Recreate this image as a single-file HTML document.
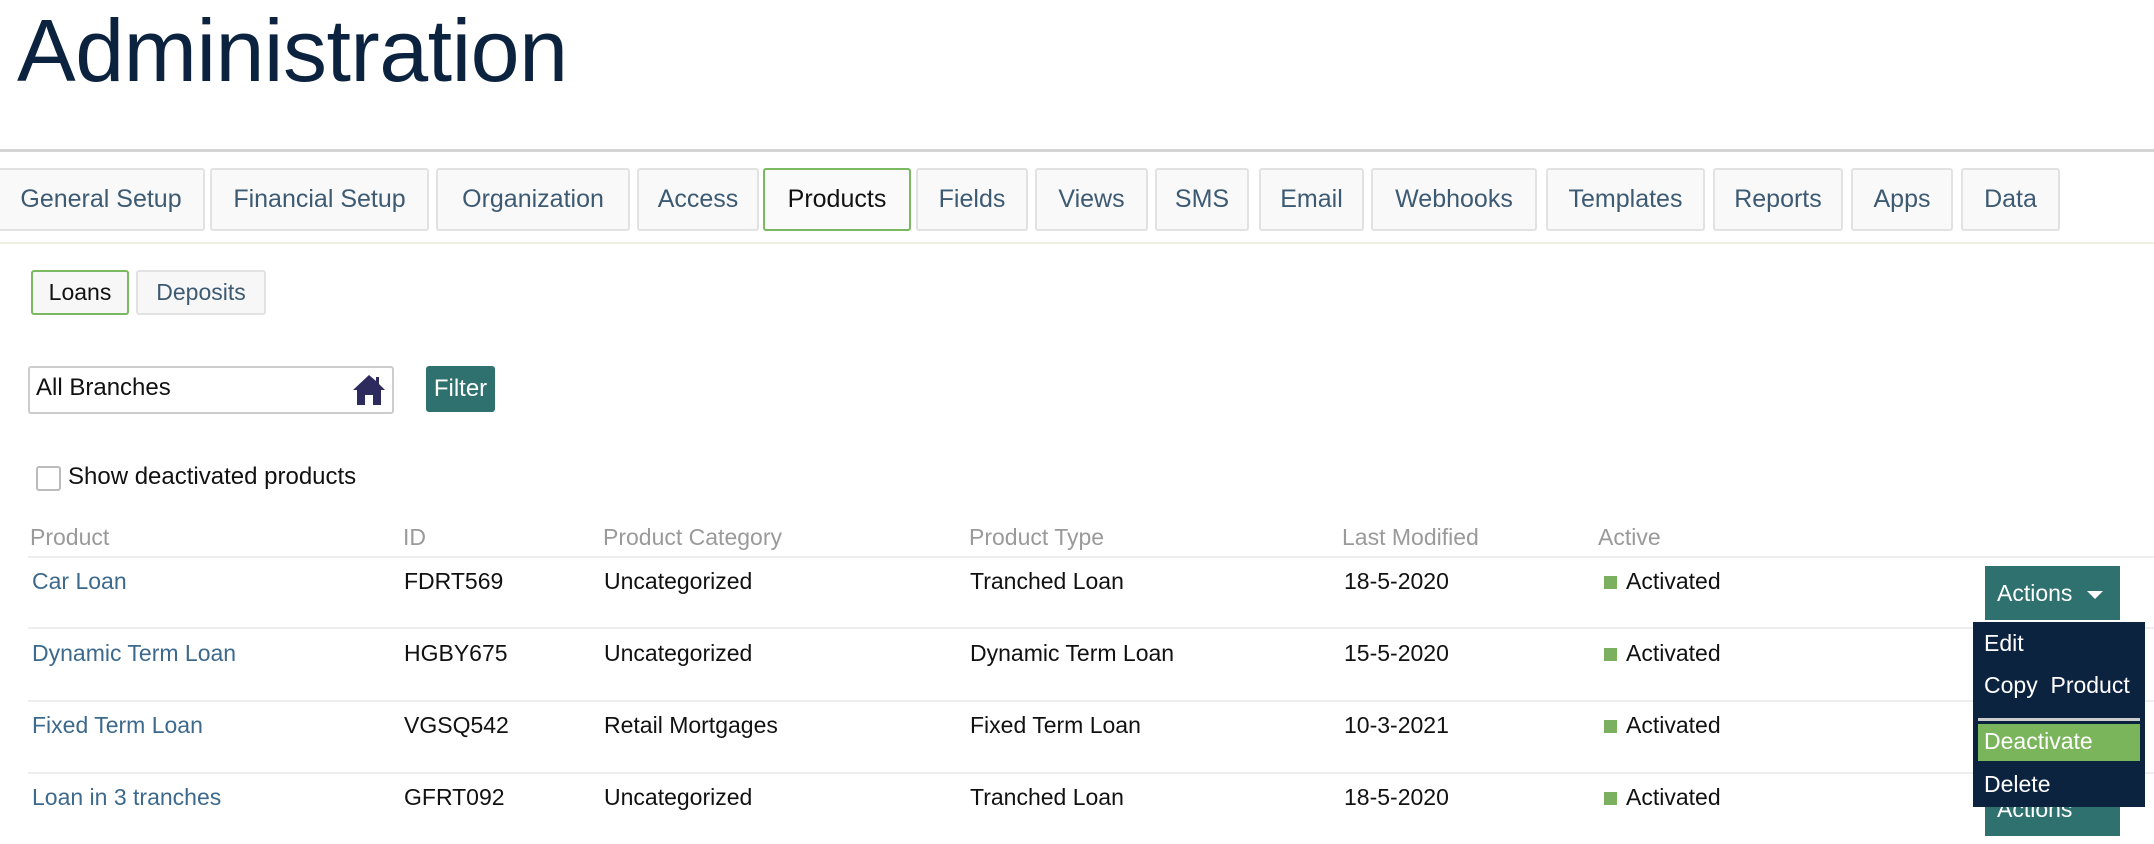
<!DOCTYPE html>
<html><head><style>
*{margin:0;padding:0;box-sizing:border-box}
body{width:2154px;height:844px;overflow:hidden;background:#fff;font-family:"Liberation Sans",sans-serif;position:relative;color:#111}
.a{position:absolute;white-space:nowrap}
h1{position:absolute;left:17px;top:0px;font-size:88px;font-weight:normal;color:#0c2340;letter-spacing:-0.5px}
.rule{position:absolute;left:0;top:149px;width:2154px;height:3px;background:#d4d4d4}
.tab{position:absolute;top:168px;height:63px;border:2px solid #e2e2e2;border-radius:3px;background:#f9f9f9;color:#3d5a73;font-size:25px;text-align:center;line-height:58px;white-space:nowrap}
.tab.on{border-color:#7ab862;color:#111;background:#fafafa}
.line2{position:absolute;left:0;top:242px;width:2154px;height:2px;background:#eef0e2}
.btn{position:absolute;height:45px;border:2px solid #e2e2e2;border-radius:3px;background:#f7f7f7;color:#3d5a73;font-size:23px;text-align:center;line-height:41px}
.hd{position:absolute;top:524px;font-size:23px;color:#9a9a9a}
.hr{position:absolute;left:28px;width:2126px;height:2px;background:#eee}
.c{position:absolute;font-size:23px;color:#111;white-space:nowrap}
.l{color:#3d6a8c}
.sq{position:absolute;width:13px;height:13px;background:#7ab05f}
</style></head><body>
<h1>Administration</h1>
<div class="rule"></div>
<div class="tab" style="left:-3px;width:208px">General Setup</div>
<div class="tab" style="left:210px;width:219px">Financial Setup</div>
<div class="tab" style="left:436px;width:194px">Organization</div>
<div class="tab" style="left:637px;width:122px">Access</div>
<div class="tab on" style="left:763px;width:148px">Products</div>
<div class="tab" style="left:916px;width:112px">Fields</div>
<div class="tab" style="left:1035px;width:113px">Views</div>
<div class="tab" style="left:1155px;width:94px">SMS</div>
<div class="tab" style="left:1259px;width:105px">Email</div>
<div class="tab" style="left:1371px;width:166px">Webhooks</div>
<div class="tab" style="left:1546px;width:159px">Templates</div>
<div class="tab" style="left:1713px;width:130px">Reports</div>
<div class="tab" style="left:1851px;width:102px">Apps</div>
<div class="tab" style="left:1961px;width:99px">Data</div>
<div class="line2"></div>
<div class="btn" style="left:31px;top:270px;width:98px;border-color:#7ab862;color:#111">Loans</div>
<div class="btn" style="left:136px;top:270px;width:130px">Deposits</div>
<div class="a" style="left:28px;top:366px;width:366px;height:48px;border:2px solid #ccc;border-radius:3px"></div>
<div class="a" style="left:36px;top:374px;font-size:24px">All Branches</div>
<svg class="a" style="left:352px;top:373px" width="34" height="34" viewBox="0 0 34 34"><path d="M17 2 L1 17 L5 17 L5 32 L13 32 L13 22 L21 22 L21 32 L29 32 L29 17 L33 17 L27 11 L27 4 L24 4 L24 8 Z" fill="#2d2b5e"/></svg>
<div class="a" style="left:426px;top:366px;width:69px;height:46px;background:#2f716e;border-radius:3px;color:#fff;font-size:24px;text-align:center;line-height:46px">Filter</div>
<div class="a" style="left:36px;top:466px;width:25px;height:25px;border:2px solid #bbb;border-radius:3px"></div>
<div class="a" style="left:68px;top:463px;font-size:24px">Show deactivated products</div>
<div class="hd" style="left:30px">Product</div>
<div class="hd" style="left:403px">ID</div>
<div class="hd" style="left:603px">Product Category</div>
<div class="hd" style="left:969px">Product Type</div>
<div class="hd" style="left:1342px">Last Modified</div>
<div class="hd" style="left:1598px">Active</div>
<div class="hr" style="top:556px"></div>
<div class="hr" style="top:627px"></div>
<div class="hr" style="top:700px"></div>
<div class="hr" style="top:772px"></div>

<div class="c l" style="left:32px;top:568px">Car Loan</div>
<div class="c" style="left:404px;top:568px">FDRT569</div>
<div class="c" style="left:604px;top:568px">Uncategorized</div>
<div class="c" style="left:970px;top:568px">Tranched Loan</div>
<div class="c" style="left:1344px;top:568px">18-5-2020</div>
<div class="sq" style="left:1604px;top:576px"></div><div class="c" style="left:1626px;top:568px">Activated</div>

<div class="c l" style="left:32px;top:640px">Dynamic Term Loan</div>
<div class="c" style="left:404px;top:640px">HGBY675</div>
<div class="c" style="left:604px;top:640px">Uncategorized</div>
<div class="c" style="left:970px;top:640px">Dynamic Term Loan</div>
<div class="c" style="left:1344px;top:640px">15-5-2020</div>
<div class="sq" style="left:1604px;top:648px"></div><div class="c" style="left:1626px;top:640px">Activated</div>

<div class="c l" style="left:32px;top:712px">Fixed Term Loan</div>
<div class="c" style="left:404px;top:712px">VGSQ542</div>
<div class="c" style="left:604px;top:712px">Retail Mortgages</div>
<div class="c" style="left:970px;top:712px">Fixed Term Loan</div>
<div class="c" style="left:1344px;top:712px">10-3-2021</div>
<div class="sq" style="left:1604px;top:720px"></div><div class="c" style="left:1626px;top:712px">Activated</div>

<div class="c l" style="left:32px;top:784px">Loan in 3 tranches</div>
<div class="c" style="left:404px;top:784px">GFRT092</div>
<div class="c" style="left:604px;top:784px">Uncategorized</div>
<div class="c" style="left:970px;top:784px">Tranched Loan</div>
<div class="c" style="left:1344px;top:784px">18-5-2020</div>
<div class="sq" style="left:1604px;top:792px"></div><div class="c" style="left:1626px;top:784px">Activated</div>

<div class="a" style="left:1985px;top:566px;width:135px;height:54px;background:#2f716e;color:#fff;font-size:23px;line-height:54px;padding-left:12px">Actions <span style="display:inline-block;width:0;height:0;border-left:8px solid transparent;border-right:8px solid transparent;border-top:8px solid #fff;vertical-align:middle;margin-left:8px"></span></div>
<div class="a" style="left:1985px;top:782px;width:135px;height:54px;background:#2f716e;color:#fff;font-size:23px;line-height:54px;padding-left:12px">Actions</div>
<div class="a" style="left:1973px;top:622px;width:172px;height:185px;background:#0c2340;color:#fff;font-size:23px">
<div class="a" style="left:11px;top:8px">Edit</div>
<div class="a" style="left:11px;top:50px">Copy&nbsp; Product</div>
<div class="a" style="left:5px;top:96px;width:162px;height:3px;background:#ccc"></div>
<div class="a" style="left:5px;top:102px;width:162px;height:37px;background:#7ab55c"></div>
<div class="a" style="left:11px;top:106px">Deactivate</div>
<div class="a" style="left:11px;top:149px">Delete</div>
</div>
</body></html>
